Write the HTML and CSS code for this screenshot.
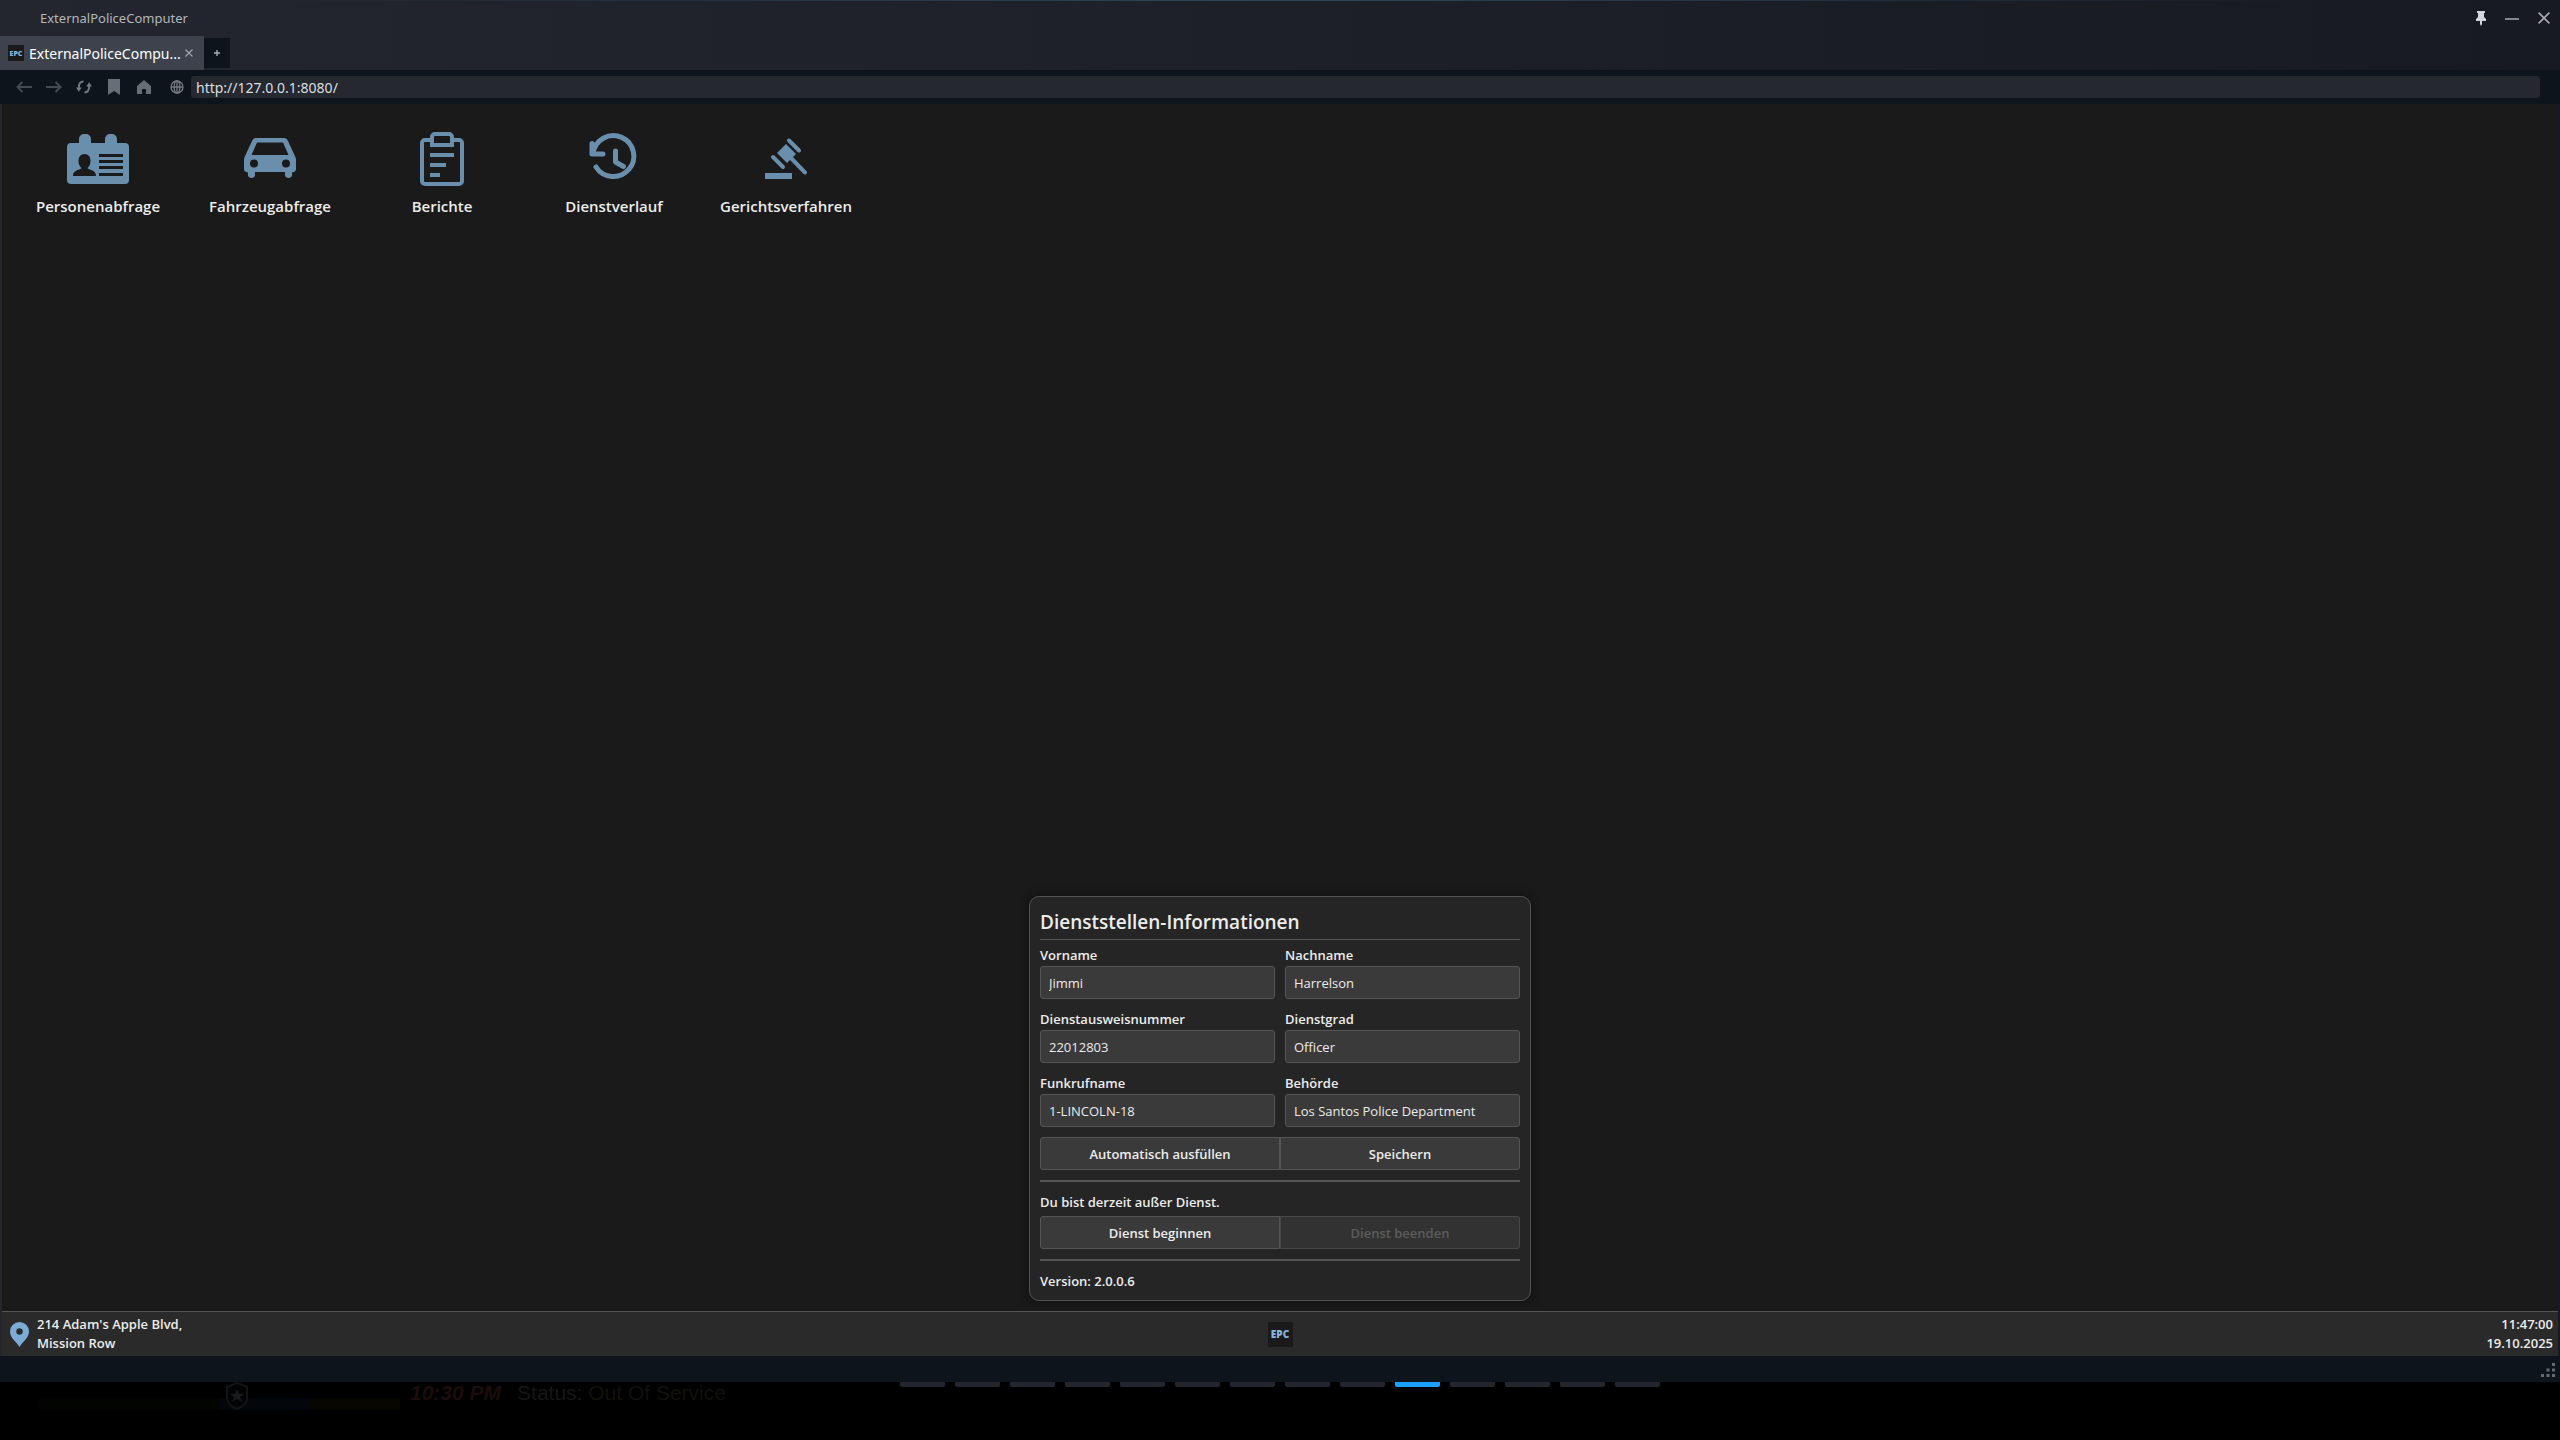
FILE: index.html
```html
<!DOCTYPE html>
<html lang="de">
<head>
  <meta charset="UTF-8" />
  <meta name="viewport" content="width=device-width, initial-scale=1.0"/>
  <title>ExternalPoliceComputer</title>
  <link rel="stylesheet" href="styles.css">
</head>
<body>
  <div class="window">
    <header class="titlebar">
      <span class="window-title">ExternalPoliceComputer</span>
      <div class="window-controls">
        <button aria-label="Anheften"><svg width="10" height="15" viewBox="0 0 10 15"><path fill="#d3d6da" d="M1 0h8v2H8v4l2 2v2H6v3l-1 2-1-2v-3H0V8l2-2V2H1z"/></svg></button>
        <button aria-label="Minimieren"><svg width="14" height="14" viewBox="0 0 14 14"><path stroke="#7f8890" stroke-width="2" d="M0 8h14"/></svg></button>
        <button aria-label="Schließen"><svg width="12" height="12" viewBox="0 0 12 12"><path stroke="#a3abb2" stroke-width="1.6" d="M.6.6l10.8 10.8M11.4.6L.6 11.4"/></svg></button>
      </div>
    </header>

    <div class="tabs">
      <div class="tab">
        <span class="tab-icon">EPC</span>
        <span class="tab-title">ExternalPoliceCompu...</span>
        <button aria-label="Tab schließen"><svg width="8" height="8" viewBox="0 0 8 8"><path stroke="#9fa4ac" stroke-width="1.2" d="M.5.5l7 7M7.5.5l-7 7"/></svg></button>
      </div>
      <button class="tab-new" aria-label="Neuer Tab"><svg width="6" height="6" viewBox="0 0 6 6"><path stroke="#a9aeb4" stroke-width="1.4" d="M0 3h6M3 0v6"/></svg></button>
    </div>

    <nav class="toolbar">
      <button aria-label="Zurück"><svg width="16" height="12" viewBox="0 0 16 12" fill="none" stroke="#444a52" stroke-width="2"><path d="M16 6H1.5M6.5 1l-5 5 5 5"/></svg></button>
      <button aria-label="Vorwärts"><svg width="16" height="12" viewBox="0 0 16 12" fill="none" stroke="#444a52" stroke-width="2"><path d="M0 6h14.5M9.5 1l5 5-5 5"/></svg></button>
      <button aria-label="Neu laden"><svg width="16" height="14" viewBox="0 0 17 14"><path fill="none" stroke="#747a84" stroke-width="2" d="M8 1.2C4.5 1.2 3 4 3 8M9 12.8c3.5 0 5-2.8 5-6.8"/><path fill="#747a84" d="M0 7.500h6.200L3 12zM10.800 6.500H17L14 2z"/></svg></button>
      <button aria-label="Lesezeichen"><svg width="12" height="16" viewBox="0 0 12 16"><path fill="#686e78" d="M0 0h12v16l-6-4-6 4z"/></svg></button>
      <button aria-label="Startseite"><svg width="14" height="14" viewBox="0 0 14 14"><path fill="#686e78" d="M7 0l7 6v8H9V9H5v5H0V6z"/></svg></button>
      <svg class="globe" width="14" height="14" viewBox="0 0 14 14" fill="none" stroke="#747a84" stroke-width="1.3"><circle cx="7" cy="7" r="6"/><ellipse cx="7" cy="7" rx="2.8" ry="6"/><path d="M7 1v12M1 7h12"/></svg>
      <input class="url" type="text" aria-label="Adresse" value="http://127.0.0.1:8080/">
    </nav>

    <main class="page">
      <div class="desktop">
        <div class="apps">
          <button class="app">
            <svg width="62" height="50" viewBox="0 0 62 50"><path fill="#6a8fac" fill-rule="evenodd" d="M4 9h8V5a5 5 0 0 1 5-5h2a5 5 0 0 1 5 5v4h14V5a5 5 0 0 1 5-5h2a5 5 0 0 1 5 5v4h8a4 4 0 0 1 4 4v33a4 4 0 0 1-4 4H4a4 4 0 0 1-4-4V13a4 4 0 0 1 4-4zM17.500 20c-4 0-6 3-6 7 0 3 1.200 5.500 3 7-1 2-8.500 1.500-8.500 8h23c0-6.500-7.500-6-8.500-8 1.800-1.500 3-4 3-7 0-4-2-7-6-7zM32 20v3h24v-3zM32 26v3h24v-3zM32 32v3h24v-3zM32 39v3h24v-3z"/></svg>
            <span>Personenabfrage</span>
          </button>
          <button class="app">
            <svg width="52" height="42" viewBox="0 0 52 42"><path fill="#6a8fac" fill-rule="evenodd" d="M12 0h28c2 0 3 1 4 3l6 13c1 2 2 4 2 6v9c0 2-1 3-4 3.500V38a4 4 0 0 1-7 0v-4H11v4a4 4 0 0 1-7 0v-3.500C1 34 0 33 0 31v-9c0-2 1-4 2-6L8 3c1-2 2-3 4-3zM13 4.500L7.500 17h37L39 4.500zM10 21.500a4 4 0 1 0 0 8 4 4 0 0 0 0-8zM42 21.500a4 4 0 1 0 0 8 4 4 0 0 0 0-8z"/></svg>
            <span>Fahrzeugabfrage</span>
          </button>
          <button class="app">
            <svg width="44" height="54" viewBox="0 0 44 54" fill="none" stroke="#6a8fac" stroke-width="4"><path d="M11 8H5a3 3 0 0 0-3 3v38a3 3 0 0 0 3 3h34a3 3 0 0 0 3-3V11a3 3 0 0 0-3-3h-6M12 13V5a3 3 0 0 1 3-3h14a3 3 0 0 1 3 3v8zM10 23h24M10 33h16M10 43h10"/></svg>
            <span>Berichte</span>
          </button>
          <button class="app">
            <svg width="50" height="46" viewBox="0 0 50 46" fill="none" stroke="#6a8fac" stroke-width="5" stroke-linecap="round" stroke-linejoin="round"><path d="M3 7.500V18h11M4 17.500A20.500 20.500 0 1 1 7 31M26.500 15v11l8 4.500"/></svg>
            <span>Dienstverlauf</span>
          </button>
          <button class="app">
            <svg width="44" height="42" viewBox="0 0 44 42"><path fill="#6a8fac" d="M22 6l10 10-9 9-10-10z"/><g stroke="#6a8fac" stroke-linecap="round"><path stroke-width="4" d="M25 2.500l10 10M9 19l10 10M27 20l14 14.500"/><path stroke-width="6" stroke-linecap="square" d="M4 38h21"/></g></svg>
            <span>Gerichtsverfahren</span>
          </button>
        </div>

        <form class="panel" onsubmit="event.preventDefault()">
          <h1>Dienststellen-Informationen</h1>
          <div class="fields">
            <div class="field">
              <label for="firstName">Vorname</label>
              <input type="text" id="firstName" value="Jimmi">
            </div>
            <div class="field">
              <label for="lastName">Nachname</label>
              <input type="text" id="lastName" value="Harrelson">
            </div>
            <div class="field">
              <label for="badgeNumber">Dienstausweisnummer</label>
              <input type="text" id="badgeNumber" value="22012803">
            </div>
            <div class="field">
              <label for="rank">Dienstgrad</label>
              <input type="text" id="rank" value="Officer">
            </div>
            <div class="field">
              <label for="callSign">Funkrufname</label>
              <input type="text" id="callSign" value="1-LINCOLN-18">
            </div>
            <div class="field">
              <label for="agency">Behörde</label>
              <input type="text" id="agency" value="Los Santos Police Department">
            </div>
          </div>
          <div class="buttons">
            <button type="button">Automatisch ausfüllen</button>
            <button type="submit">Speichern</button>
          </div>
          <hr>
          <p class="status">Du bist derzeit außer Dienst.</p>
          <div class="buttons">
            <button type="button">Dienst beginnen</button>
            <button type="button" disabled>Dienst beenden</button>
          </div>
          <hr>
          <p>Version: 2.0.0.6</p>
        </form>
      </div>

      <footer class="taskbar">
        <div class="location">
          <svg width="19" height="25" viewBox="0 0 19 25"><path fill="#7cabd6" fill-rule="evenodd" d="M9.500 0A9.500 9.500 0 0 0 0 9.500C0 16 6 19 9.500 25 13 19 19 16 19 9.500A9.500 9.500 0 0 0 9.500 0zm0 6.300a3.200 3.200 0 1 1 0 6.400 3.200 3.200 0 0 1 0-6.400z"/></svg>
          <p>214 Adam's Apple Blvd,<br>Mission Row</p>
        </div>
        <span class="logo">EPC</span>
        <p class="clock">11:47:00<br>19.10.2025</p>
      </footer>
    </main>

    <div class="window-bottom">
      <svg width="14" height="14" viewBox="0 0 14 14" fill="#626a73"><path d="M11 0h3v3h-3zM5.500 5.500h3v3h-3zM11 5.500h3v3h-3zM0 11h3v3H0zM5.500 11h3v3h-3zM11 11h3v3h-3z"/></svg>
    </div>
  </div>

  <div class="game">
    <div class="hud">
      <svg width="24" height="28" viewBox="0 0 24 28"><path fill="#020304" stroke="#121415" stroke-width="2" d="M12 1l10 4v11c0 6-5 9-10 11C7 25 2 22 2 16V5z"/><path fill="#1a1b1c" d="M12 7l2 5h5l-4 3 2 5-5-3-5 3 2-5-4-3h5z"/></svg>
      <span class="game-time">10:30 PM</span>
      <span class="game-status">Status: <span>Out Of Service</span></span>
    </div>
    <div class="pages">
      <i></i><i></i><i></i><i></i><i></i><i></i><i></i>
      <i></i><i></i><i class="active"></i><i></i><i></i><i></i><i></i>
    </div>
    <div></div>
  </div>
</body>
</html>
```

FILE: styles.css
```css
*,
*::before,
*::after {
  margin: 0;
  padding: 0;
  box-sizing: border-box;
}

body {
  min-height: 100vh;
  display: flex;
  flex-direction: column;
  background-color: #000;
  color: #ececec;
  font-family: "Open Sans", "Noto Sans", sans-serif;
  font-size: 13px;
}

button,
input {
  font: inherit;
  color: inherit;
  border: none;
  background: none;
}

svg {
  display: block;
  flex-shrink: 0;
}

.window {
  flex: 1;
  display: flex;
  flex-direction: column;
  background:
    linear-gradient(to right, transparent 10%, #2a475e 50%, transparent 90%) top / 100% 1px no-repeat,
    linear-gradient(to right, #23262e, #171a21);
}

/* window frame */
.titlebar {
  height: 36px;
  padding: 0 10px 0 40px;
  display: flex;
  align-items: center;
  justify-content: space-between;
}

.window-title {
  color: #b3b6bb;
  font-family: "Noto Sans", sans-serif;
}

.window-controls {
  display: flex;
  align-items: center;
  gap: 19px;
}

.tabs {
  height: 34px;
  display: flex;
  align-items: center;
}

.tab {
  width: 204px;
  height: 34px;
  padding: 0 11px 0 8px;
  display: flex;
  align-items: center;
  background-color: #3d424d;
}

.tab-icon,
.logo {
  display: flex;
  align-items: center;
  justify-content: center;
  background-color: #1a1a1a;
  color: #86b5de;
  font-weight: 800;
}

.tab-icon {
  width: 16px;
  height: 16px;
  font-size: 7px;
}

.tab-title {
  flex: 1;
  margin-left: 5px;
  white-space: nowrap;
  color: #fff;
  font-family: "Noto Sans", sans-serif;
  font-size: 14px;
}

.tab-new {
  width: 26px;
  height: 30px;
  display: flex;
  align-items: center;
  justify-content: center;
  background-color: #0e141b;
}

.toolbar {
  height: 34px;
  padding: 0 20px 0 16px;
  display: flex;
  align-items: center;
  gap: 14px;
  background-color: #0e141b;
}

.toolbar button {
  width: 16px;
  display: flex;
  justify-content: center;
}

.toolbar .globe {
  margin: 0 -7px 0 4px;
}

.url {
  flex: 1;
  height: 22px;
  padding: 0 5px;
  border-radius: 3px;
  background-color: #25282e;
  color: #dcdee0;
  font-family: "Noto Sans", sans-serif;
  font-size: 14px;
}

/* page */
.page {
  flex: 1;
  margin: 0 2px;
  display: flex;
  flex-direction: column;
  background-color: #1a1a1a;
}

.desktop {
  flex: 1;
  padding: 20px 16px 10px;
  display: flex;
  flex-direction: column;
  align-items: center;
  justify-content: space-between;
}

.apps {
  align-self: stretch;
  display: flex;
  gap: 12px;
}

.app {
  width: 160px;
  display: flex;
  flex-direction: column;
  align-items: center;
  gap: 2px;
  font-size: 15px;
  font-weight: 600;
  line-height: 20px;
}

.app svg {
  height: 70px;
}

.panel {
  width: 502px;
  padding: 10px 10px 9px;
  border: 1px solid #555;
  border-radius: 10px;
  background-color: #252525;
  box-shadow: 0 0 10px rgba(0, 0, 0, 0.5);
  font-weight: 600;
  line-height: 20px;
}

.panel h1 {
  margin-bottom: 5px;
  padding-bottom: 2px;
  border-bottom: 1px solid #555;
  font-size: 19px;
  font-weight: 600;
  line-height: 30px;
}

.fields {
  display: grid;
  grid-template-columns: 1fr 1fr;
  gap: 10px;
}

.field {
  display: flex;
  flex-direction: column;
  gap: 1px;
}

.field input {
  width: 100%;
  height: 33px;
  padding: 0 8px;
  border: 1px solid #555;
  border-radius: 3px;
  background-color: #3a3a3a;
  font-weight: 400;
}

.buttons {
  display: flex;
}

.fields + .buttons {
  margin-top: 10px;
}

.buttons button {
  flex: 1;
  height: 33px;
  border: 1px solid #555;
  border-radius: 3px 0 0 3px;
  background-color: #3a3a3a;
}

.buttons button:last-child {
  border-radius: 0 3px 3px 0;
}

.buttons button:disabled {
  border-color: #484848;
  background-color: #323232;
  color: #5c5c5c;
}

.panel hr {
  height: 2px;
  margin: 10px 0;
  border: none;
  background-color: #555;
}

.status {
  margin-bottom: 4px;
}

.taskbar {
  height: 45px;
  padding: 0 5px;
  display: grid;
  grid-template-columns: 1fr auto 1fr;
  align-items: center;
  border-top: 1px solid #555;
  background-color: #2a2a2a;
  font-weight: 600;
  line-height: 19px;
}

.location {
  padding-left: 3px;
  display: flex;
  align-items: center;
  gap: 8px;
}

.logo {
  width: 25px;
  height: 25px;
  font-size: 10px;
}

.clock {
  text-align: right;
}

.window-bottom {
  height: 26px;
  padding: 0 5px 5px 0;
  display: flex;
  align-items: flex-end;
  justify-content: flex-end;
  background-color: #0e141b;
}

/* dimmed game screen below the window */
.game {
  height: 58px;
  display: grid;
  grid-template-columns: 1fr auto 1fr;
  background: linear-gradient(to right, transparent 38px, #020402 38px 218px, #03060a 222px 308px, #070600 312px 400px, transparent 400px) 0 16px / 100% 12px no-repeat;
}

.hud {
  padding-left: 225px;
  display: flex;
  align-items: flex-start;
  line-height: 22px;
  white-space: nowrap;
}

.game-time {
  margin-left: 161px;
  color: #1c0d0b;
  font-family: "Liberation Sans", sans-serif;
  font-size: 21px;
  font-style: italic;
  font-weight: bold;
}

.game-status {
  margin-left: 16px;
  color: #161616;
  font-family: "Liberation Sans", sans-serif;
  font-size: 21px;
}

.game-status span {
  color: #12110a;
}

.pages {
  display: flex;
  gap: 10px;
}

.pages i {
  width: 45px;
  height: 5px;
  border-radius: 0 0 2px 2px;
  background-color: #23262e;
}

.pages .active {
  background-color: #1a9fff;
}
```
